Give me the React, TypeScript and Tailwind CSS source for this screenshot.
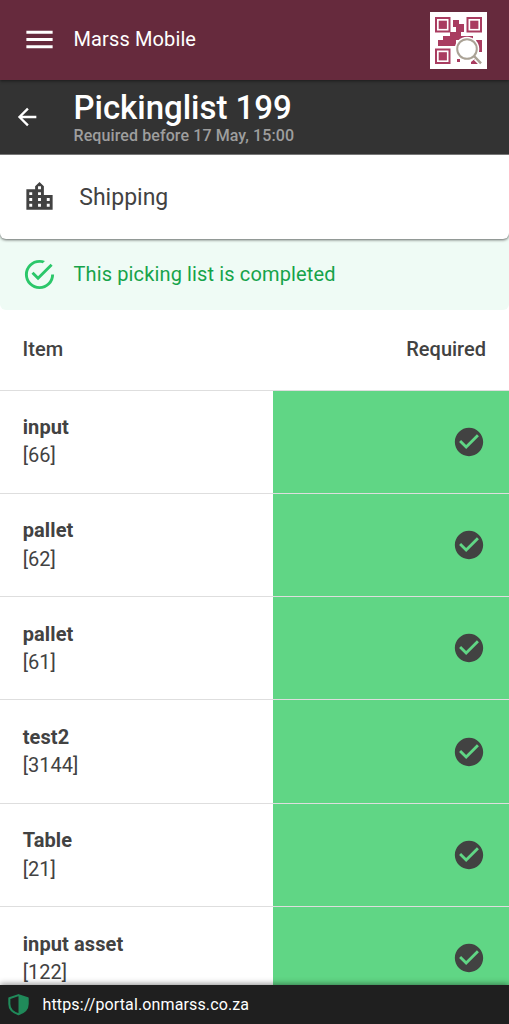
import React from "react";

type IconProps = { path: string; className: string };

function Icon({ path, className }: IconProps) {
  return (
    <svg viewBox="0 0 24 24" fill="currentColor" className={`shrink-0 ${className}`} aria-hidden="true">
      <path d={path} />
    </svg>
  );
}

const icons = {
  menu: "M3 6H21V8H3V6M3 11H21V13H3V11M3 16H21V18H3V16Z",
  back: "M20 11V13H8L13.5 18.5L12.08 19.92L4.16 12L12.08 4.08L13.5 5.5L8 11H20Z",
  city: "M19 15H17V13H19M19 19H17V17H19M13 7H11V5H13M13 11H11V9H13M13 15H11V13H13M13 19H11V17H13M7 11H5V9H7M7 15H5V13H7M7 19H5V17H7M15 11V5L12 2L9 5V7H3V21H21V11H15Z",
  checkOutline:
    "M20 12A8 8 0 0 1 12 20A8 8 0 0 1 4 12A8 8 0 0 1 12 4C12.76 4 13.5 4.11 14.2 4.31L15.77 2.74A9.93 9.93 0 0 0 12 2A10 10 0 0 0 2 12A10 10 0 0 0 12 22A10 10 0 0 0 22 12M7.91 10.08L6.5 11.5L11 16L21 6L19.59 4.58L11 13.17L7.91 10.08Z",
  check:
    "M12 2C6.5 2 2 6.5 2 12S6.5 22 12 22S22 17.5 22 12S17.5 2 12 2M10 17L5 12L6.41 10.59L10 14.17L17.59 6.58L19 8L10 17Z",
};

function Logo() {
  return (
    <svg viewBox="0 0 57 57" className="mt-[2px] size-[57px] shrink-0" role="img" aria-label="Marss">
      <rect width="57" height="57" fill="#fff" />
      <g fill="none" stroke="#a93c60" strokeWidth="2">
        <rect x="6" y="6" width="13.5" height="13.5" />
        <rect x="37.5" y="6" width="13.5" height="13.5" />
        <rect x="6" y="37.5" width="13.5" height="13.5" />
      </g>
      <g fill="#a93c60">
        <rect x="8.7" y="8.7" width="8.2" height="8.2" />
        <rect x="40.2" y="8.7" width="8.2" height="8.2" />
        <rect x="8.7" y="40.2" width="8.2" height="8.2" />
        <path d="M23 8H29V12H34V20H31V24H43V28H26V34H8V28H13V24H20V20H26V15H23Z" />
        <path d="M46 28H52V40H49V34H46ZM41 50L46 46L50 50V52H41ZM27 47H30V50H27Z" />
      </g>
      <path d="M46 46L52 52" stroke="#fff" strokeWidth="6" />
      <circle cx="37" cy="37" r="12.3" fill="#fff" />
      <path d="M44 44L51 51.3" stroke="#aaa295" strokeWidth="2.5" />
      <circle cx="37" cy="37" r="9.8" fill="#fff" stroke="#aaa295" strokeWidth="2" />
    </svg>
  );
}

const items = [
  { name: "input", id: 66 },
  { name: "pallet", id: 62 },
  { name: "pallet", id: 61 },
  { name: "test2", id: 3144 },
  { name: "Table", id: 21 },
  { name: "input asset", id: 122 },
];

export default function App() {
  return (
    <div className="flex h-[1024px] w-[509px] flex-col overflow-hidden bg-white font-['Roboto',sans-serif] text-[#424242]">
      <header className="relative z-10 flex h-[79.5px] shrink-0 items-center bg-[#662a3d] pr-[22.5px] pl-[22px] text-white shadow-[0_1px_3px_rgba(0,0,0,0.5)]">
        <Icon path={icons.menu} className="size-[35px]" />
        <span className="ml-[16.5px] grow pb-px text-[20px] leading-7 tracking-[0.12px]">Marss Mobile</span>
        <Logo />
      </header>

      <div className="flex h-[75px] shrink-0 border-b border-[#777] bg-[#333] pl-[12.5px] text-white">
        <Icon path={icons.back} className="mt-[23.5px] size-[28px]" />
        <div className="ml-[33px] pt-[9px]">
          <h1 className="text-[33px] leading-[37px] font-medium tracking-[-0.03px]">Pickinglist 199</h1>
          <p className="text-[16px] leading-5 font-medium tracking-[0.1px] text-[#9e9e9e]">Required before 17 May, 15:00</p>
        </div>
      </div>

      <main className="min-h-0 grow overflow-hidden">
        <div className="relative z-10 bg-[#effbf5]">
          <section className="flex h-[84.5px] items-center rounded-b-[6px] bg-white pl-[22px] shadow-[0_1px_3px_rgba(0,0,0,0.6)]">
            <Icon path={icons.city} className="size-[35px]" />
            <span className="ml-[22.3px] pt-[1.5px] text-[23px] leading-8">Shipping</span>
          </section>
        </div>
        <div className="flex h-[70.5px] items-center rounded-b-[6px] bg-[#effbf5] pl-[22px]">
          <Icon path={icons.checkOutline} className="size-[35px] text-[#2bc76a]" />
          <span className="ml-[16.5px] text-[20px] leading-7 tracking-[0.13px] text-[#16a34a]">This picking list is completed</span>
        </div>

        <div className="flex h-[80px] items-center justify-between pr-[23px] pl-[22.6px] pb-[2px] text-[20px] font-medium">
          <span>Item</span>
          <span>Required</span>
        </div>
        {items.map((item) => (
          <div key={item.id} className="flex h-[103.3px] border-t border-[#dedede]">
            <div className="flex w-[273.4px] shrink-0 flex-col justify-center pb-[0.6px] pl-[22.7px] text-[20px] leading-[28.3px]">
              <span className="font-bold tracking-[0.1px]">{item.name}</span>
              <span>[{item.id}]</span>
            </div>
            <div className="flex grow items-center justify-end bg-[#60d685] pr-[23px]">
              <Icon path={icons.check} className="size-[34px]" />
            </div>
          </div>
        ))}
      </main>

      <footer className="relative z-10 flex h-[39px] shrink-0 items-center bg-[#1f1f1f] pl-[6px] text-white shadow-[0_-1px_6px_rgba(0,0,0,0.45)]">
        <svg viewBox="0 0 24 24" className="size-[25px] shrink-0" aria-hidden="true">
          <path d="M12 3L20.8 6V11.5C20.8 16 17 19.7 12 21.3C7 19.7 3.2 16 3.2 11.5V6Z" fill="none" stroke="#208a5a" strokeWidth="2" strokeLinejoin="round" />
          <path d="M12 3L20.8 6V11.5C20.8 16 17 19.7 12 21.3Z" fill="#208a5a" />
        </svg>
        <span className="ml-[11.5px] text-[16px] leading-5 tracking-[0.13px]">https://portal.onmarss.co.za</span>
      </footer>
    </div>
  );
}
